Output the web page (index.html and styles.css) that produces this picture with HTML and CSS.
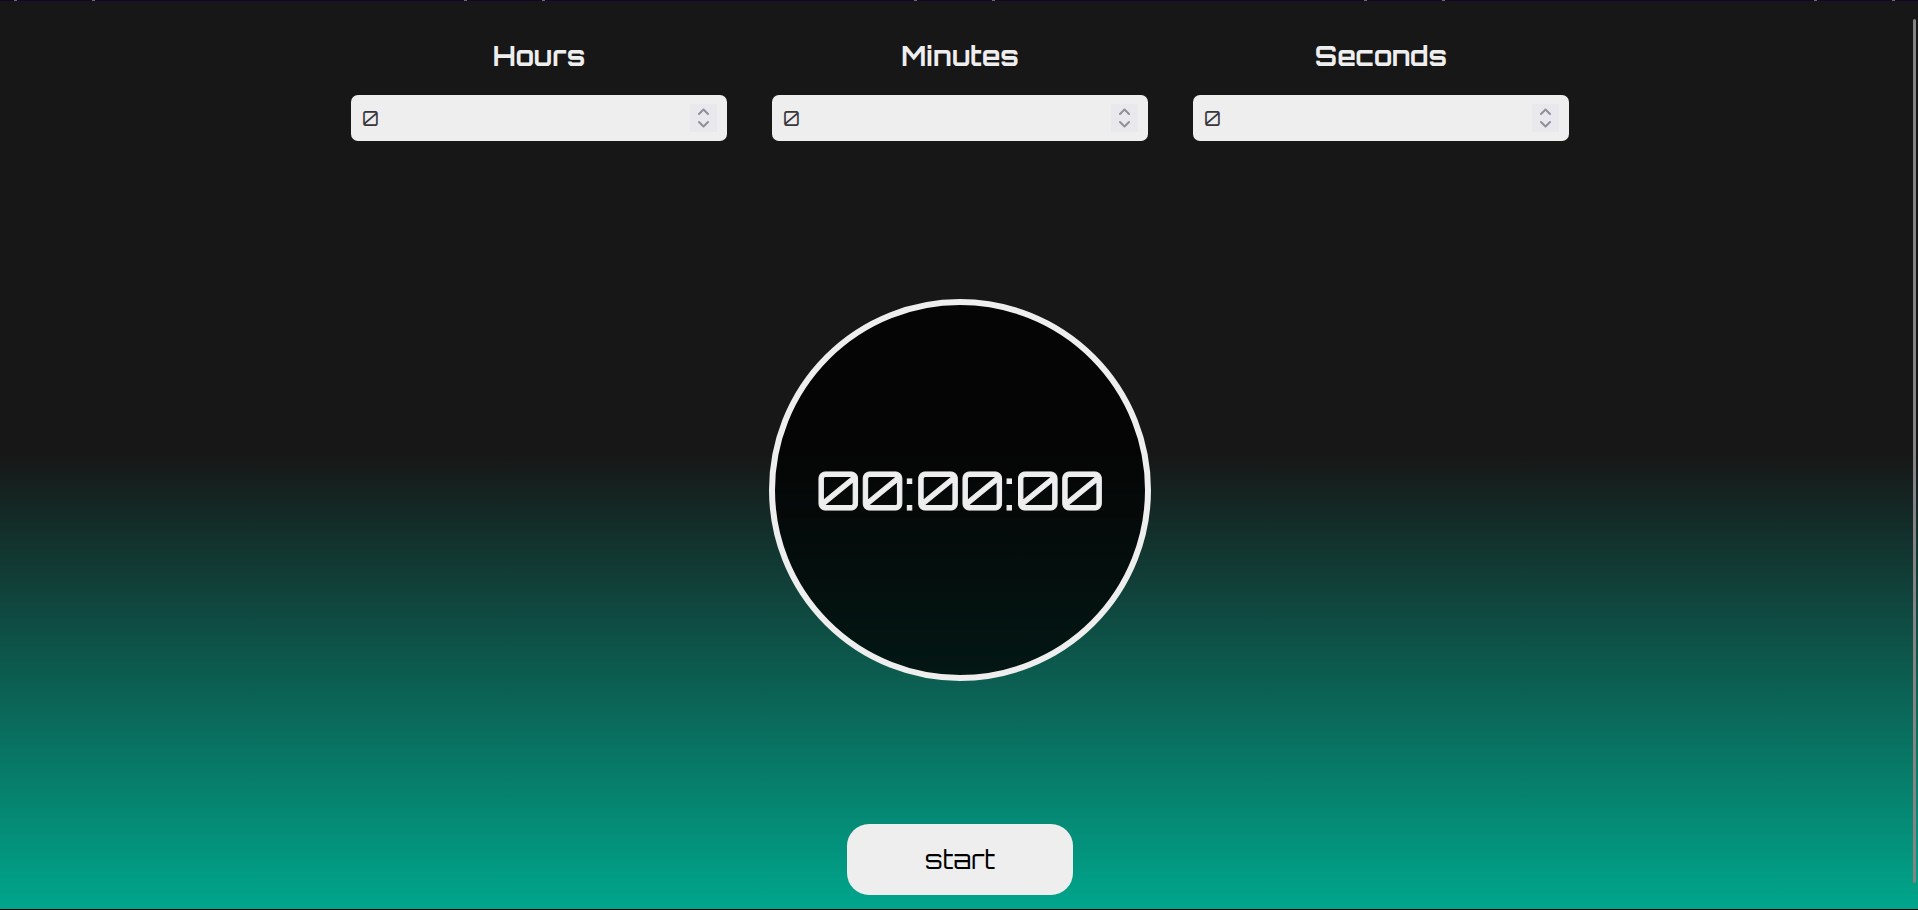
FILE: index.html
```html
<!DOCTYPE html>
<html lang="en">
<head>
<meta charset="utf-8">
<meta name="viewport" content="width=device-width, initial-scale=1">
<title>Timer</title>
<link rel="stylesheet" href="styles.css">
</head>
<body>
<main class="timer">
  <form class="fields">
    <div class="field">
      <label class="field-label" for="hours">Hours</label>
      <div class="field-box">
        <input class="field-input" id="hours" type="number" min="0" value="0">
        <button class="stepper" type="button" aria-label="Change hours"><svg class="stepper-icon" viewBox="0 0 27 28" aria-hidden="true"><path d="M9 10l4.500-4.500L18 10M9 18l4.500 4.500L18 18"/></svg></button>
      </div>
    </div>
    <div class="field">
      <label class="field-label" for="minutes">Minutes</label>
      <div class="field-box">
        <input class="field-input" id="minutes" type="number" min="0" value="0">
        <button class="stepper" type="button" aria-label="Change minutes"><svg class="stepper-icon" viewBox="0 0 27 28" aria-hidden="true"><path d="M9 10l4.500-4.500L18 10M9 18l4.500 4.500L18 18"/></svg></button>
      </div>
    </div>
    <div class="field">
      <label class="field-label" for="seconds">Seconds</label>
      <div class="field-box">
        <input class="field-input" id="seconds" type="number" min="0" value="0">
        <button class="stepper" type="button" aria-label="Change seconds"><svg class="stepper-icon" viewBox="0 0 27 28" aria-hidden="true"><path d="M9 10l4.500-4.500L18 10M9 18l4.500 4.500L18 18"/></svg></button>
      </div>
    </div>
  </form>
  <div class="dial"><time class="dial-time">00:00:00</time></div>
  <button class="start" type="button">start</button>
</main>
<div class="scroll-thumb" aria-hidden="true"></div>
</body>
</html>
```
FILE: styles.css
```css
* {
  box-sizing: border-box;
}

body {
  margin: 0;
  background: #171717;
  color: #eee;
  font-family: Orbitron, "DejaVu Sans", sans-serif;
}

.timer {
  display: flex;
  flex-direction: column;
  align-items: center;
  justify-content: space-between;
  min-height: 100vh;
  padding: 38px 14px 14px 16px;
  border-bottom: 1px solid #000;
  background:
    repeating-linear-gradient(90deg, #190033 0 14px, #74607c 14px 17px, #190033 17px 92px, #74607c 92px 95px, #190033 95px 450px) top / 100% 1px no-repeat,
    linear-gradient(#171717 50%, #00a68c);
}

.fields {
  display: grid;
  grid-template-columns: repeat(3, 1fr);
  gap: 45px;
  width: 100%;
  max-width: 1218px;
  padding-bottom: 15px;
}

.field {
  display: flex;
  flex-direction: column;
  gap: 21px;
}

.field-label {
  font-size: 27px;
  font-weight: 700;
  line-height: 36px;
  text-align: center;
}

.field-box {
  display: flex;
  align-items: center;
  height: 46px;
  padding: 0 10px 0 11px;
  border-radius: 7px;
  background: #eee;
}

.field-input {
  flex: 1;
  min-width: 0;
  padding: 2px 0 0;
  border: 0;
  outline: 0;
  background: transparent;
  color: #38363c;
  font-family: Orbitron, Inter, sans-serif;
  font-size: 20px;
  line-height: 28px;
  appearance: textfield;
}

.field-input::-webkit-inner-spin-button {
  appearance: none;
}

.stepper {
  width: 27px;
  height: 28px;
  padding: 0;
  border: 0;
  background: #e9e9ed;
}

.stepper-icon {
  display: block;
  fill: none;
  stroke: #8f8f9d;
  stroke-width: 2;
  stroke-linecap: round;
  stroke-linejoin: round;
}

.dial {
  display: grid;
  place-items: center;
  width: 382px;
  max-width: 100%;
  aspect-ratio: 1;
  border: 6px solid #eee;
  border-radius: 50%;
  background: rgba(0, 0, 0, 0.75);
}

.dial-time {
  font-family: Orbitron, Inter, sans-serif;
  font-size: 53px;
  font-weight: 400;
  line-height: 72px;
  -webkit-text-stroke: 1px #eee;
}

.start {
  padding: 17px 78px 18px;
  border: 0;
  border-radius: 22px;
  background: #eee;
  color: #000;
  font-family: Orbitron, "DejaVu Sans", sans-serif;
  font-size: 26px;
  line-height: 36px;
}

.scroll-thumb {
  position: fixed;
  top: 19px;
  right: 2px;
  bottom: 27px;
  width: 3px;
  border-radius: 2px;
  background: #848484;
}
```
